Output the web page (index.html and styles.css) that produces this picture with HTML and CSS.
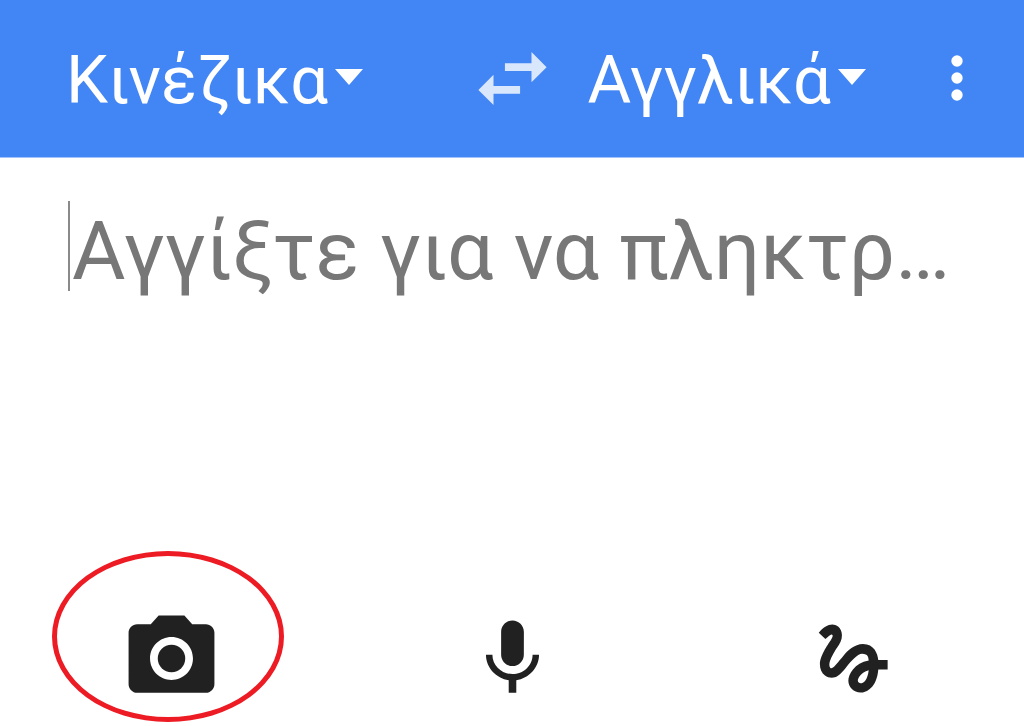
FILE: index.html
```html
<!DOCTYPE html>
<html lang="el">
<head>
<meta charset="utf-8">
<meta name="viewport" content="width=device-width, initial-scale=1">
<title>Μετάφραση</title>
<link rel="stylesheet" href="styles.css">
</head>
<body>
<header class="topbar">
  <div class="language source">
    <select class="language-select" aria-label="Γλώσσα πηγής"><option>Κινέζικα</option></select>
    <svg class="caret" viewBox="0 0 28 16" aria-hidden="true"><path d="M0 0h28L14 16z"/></svg>
  </div>
  <button class="icon-button swap" type="button" aria-label="Εναλλαγή γλωσσών">
    <svg class="icon" viewBox="0 0 24 24"><path d="M6.99 11L3 15l3.99 4v-3H14v-2H6.99v-3zM21 9l-3.99-4v3H10v2h7.01v3L21 9z"/></svg>
  </button>
  <div class="target">
    <div class="language">
      <select class="language-select" aria-label="Γλώσσα προορισμού"><option>Αγγλικά</option></select>
      <svg class="caret" viewBox="0 0 28 16" aria-hidden="true"><path d="M0 0h28L14 16z"/></svg>
    </div>
    <button class="icon-button" type="button" aria-label="Περισσότερα">
      <svg class="icon icon-small" viewBox="0 0 24 24"><circle cx="12" cy="6" r="2"/><circle cx="12" cy="12" r="2"/><circle cx="12" cy="18" r="2"/></svg>
    </button>
  </div>
</header>
<main class="entry">
  <span class="cursor"></span>
  <input class="entry-input" type="text" aria-label="Κείμενο" placeholder="Αγγίξτε για να πληκτρ…">
</main>
<footer class="tools">
  <div class="tool">
    <button class="icon-button" type="button" aria-label="Κάμερα">
      <svg class="icon icon-large" viewBox="0 0 24 24"><circle cx="12" cy="12" r="3.2"/><path d="M9 2L7.17 4H4c-1.1 0-2 .9-2 2v12c0 1.1.9 2 2 2h16c1.1 0 2-.9 2-2V6c0-1.1-.9-2-2-2h-3.17L15 2H9zm3 15c-2.76 0-5-2.24-5-5s2.24-5 5-5 5 2.24 5 5-2.24 5-5 5z"/></svg>
    </button>
    <span class="highlight"></span>
  </div>
  <div class="tool">
    <button class="icon-button" type="button" aria-label="Ομιλία">
      <svg class="icon" viewBox="0 0 24 24"><path d="M12 14c1.66 0 2.99-1.34 2.99-3L15 5c0-1.66-1.34-3-3-3S9 3.34 9 5v6c0 1.66 1.34 3 3 3zm5.3-3c0 3-2.54 5.1-5.3 5.1S6.7 14 6.7 11H5c0 3.41 2.72 6.23 6 6.72V21h2v-3.28c3.28-.48 6-3.3 6-6.72h-1.7z"/></svg>
    </button>
  </div>
  <div class="tool">
    <button class="icon-button" type="button" aria-label="Γραφή με το χέρι">
      <svg class="icon" viewBox="0 0 24 24"><path d="M4.59 6.89c.7-.71 1.4-1.35 1.71-1.22.5.2 0 1.03-.3 1.52-.25.42-2.86 3.89-2.86 6.31 0 1.28.48 2.34 1.34 2.98.75.56 1.74.73 2.64.46 1.07-.31 1.95-1.4 3.06-2.77 1.21-1.49 2.83-3.44 4.08-3.44 1.63 0 1.65 1.01 1.76 1.79-3.78.64-5.38 3.67-5.38 5.37 0 1.7 1.44 3.09 3.21 3.09 1.63 0 4.29-1.33 4.69-6.1H21v-2.5h-2.47c-.15-1.65-1.09-4.2-4.03-4.2-2.25 0-4.18 1.91-4.94 2.84-.58.73-2.06 2.48-2.29 2.72-.25.3-.68.84-1.11.84-.45 0-.72-.83-.36-1.92.35-1.09 1.4-2.86 1.85-3.52.78-1.14 1.3-1.92 1.3-3.28C8.95 3.69 7.31 3 6.44 3 5.12 3 3.97 4 3.72 4.25c-.36.36-.66.66-.88.93l1.75 1.71zm9.29 11.66c-.31 0-.74-.26-.74-.72 0-.6.73-2.2 2.87-2.76-.3 2.69-1.43 3.48-2.13 3.48z"/></svg>
    </button>
  </div>
</footer>
</body>
</html>
```
FILE: styles.css
```css
* {
  box-sizing: border-box;
}

body {
  margin: 0;
  min-height: 100vh;
  display: flex;
  flex-direction: column;
  background: #fff;
  color: #212121;
  font-family: Roboto, "Noto Sans", sans-serif;
}

.topbar {
  display: grid;
  grid-template-columns: 1fr auto 1fr;
  align-items: center;
  column-gap: 30px;
  padding: 30px 0 31px;
  background: #4285f4;
  border-bottom: 1px solid #a3c4fa;
  color: #fff;
}

.language {
  display: flex;
  align-items: center;
  gap: 6px;
}

.source {
  padding-left: 66px;
}

.language-select {
  appearance: none;
  border: 0;
  margin: 0;
  padding: 5px 0 1px;
  background: transparent;
  color: inherit;
  font: inherit;
  font-size: 67px;
  line-height: 90px;
}

.caret {
  width: 28px;
  height: 16px;
  margin-bottom: 2px;
  fill: currentColor;
}

.target {
  display: flex;
  align-items: center;
  justify-content: space-between;
  padding-right: 33px;
}

.icon-button {
  display: block;
  border: 0;
  padding: 0;
  background: transparent;
  color: inherit;
}

.swap {
  color: #d9e7fd;
}

.icon {
  display: block;
  width: 91px;
  height: 91px;
  fill: currentColor;
}

.icon-small {
  width: 68px;
  height: 68px;
}

.icon-large {
  width: 103px;
  height: 103px;
}

.entry {
  flex: 1;
  display: flex;
  align-items: flex-start;
  padding: 43px 64px 0 68px;
}

.cursor {
  width: 2px;
  height: 90px;
  background: #8a8a8a;
}

.entry-input {
  flex: 1;
  min-width: 0;
  height: 100px;
  border: 0;
  padding: 0 0 0 2px;
  outline: 0;
  background: transparent;
  color: inherit;
  font: inherit;
  font-size: 82px;
}

.entry-input::placeholder {
  color: #777;
  opacity: 1;
}

.tools {
  display: grid;
  grid-template-columns: repeat(3, 1fr);
  padding-left: 1px;
}

.tool {
  position: relative;
  display: flex;
  align-items: center;
  justify-content: center;
  height: 136px;
}

/* Ring around the camera button */
.highlight {
  position: absolute;
  left: 51px;
  top: -39px;
  width: 232px;
  height: 171px;
  border: 5px solid #ed1c24;
  border-radius: 50%;
  pointer-events: none;
}
```
